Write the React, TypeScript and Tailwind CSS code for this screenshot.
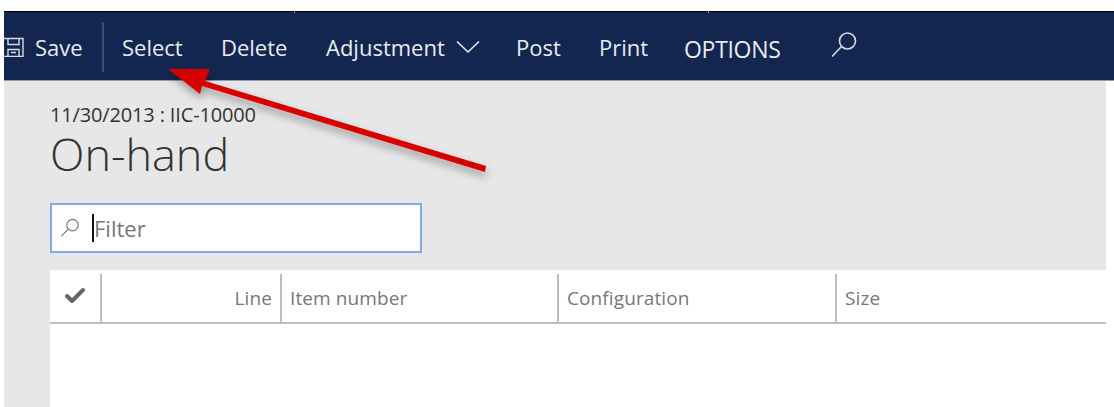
import { Check } from "lucide-react";

const COLUMNS = [
  { label: "Item number", width: "w-[277px]" },
  { label: "Configuration", width: "w-[278px]" },
  { label: "Size", width: "flex-1" },
];

function SearchGlyph({ className }: { className: string }) {
  return (
    <svg viewBox="0 0 28 28" fill="none" stroke="currentColor" strokeWidth="1.6" className={className}>
      <circle cx="17.5" cy="10" r="8" />
      <path d="M11.5 15.5 2 25.5" />
    </svg>
  );
}

function SaveGlyph() {
  return (
    <svg viewBox="0 0 20 20" fill="none" stroke="currentColor" strokeWidth="1.4" className="w-5 h-5 text-[#d5dae5]">
      <path d="M0 1.5h19v18H0" />
      <path d="M4 1.5v6h11v-6M4 19.5v-7h11v7M7 15.5h5" />
    </svg>
  );
}

export default function App() {
  return (
    <div className="relative w-[1114px] h-[407px] overflow-hidden bg-white font-['Open_Sans',sans-serif]">
      <div className="h-[11px]" />
      <div className="ml-1 h-[70px] flex items-center bg-[#12264f] border-t border-black border-b border-b-[#8e99b3] text-[#e8ebf1] text-[22px] leading-none pt-0.5">
        <SaveGlyph />
        <span className="ml-[11px] w-[67px]">Save</span>
        <div className="w-0.5 h-[50px] bg-[#3b4c70]" />
        <span className="ml-[18px] w-[99px]">Select</span>
        <span className="w-[105px]">Delete</span>
        <span className="w-[130px]">Adjustment</span>
        <svg viewBox="0 0 24 14" fill="none" stroke="currentColor" strokeWidth="1.6" className="w-6 h-3.5">
          <path d="M1 1.5 12 12 23 1.5" />
        </svg>
        <span className="ml-9 w-[83px]">Post</span>
        <span className="w-[85px]">Print</span>
        <span className="w-[146px] pt-1 text-[23px] tracking-[-0.3px]">OPTIONS</span>
        <SearchGlyph className="w-7 h-7 mb-1 text-[#d5dae5]" />
      </div>
      <div className="ml-1 mr-2 h-[326px] bg-[#e7e7e7] pl-[46px] flex flex-col">
        <div className="mt-6 text-[20px] leading-5 text-[#333] tracking-[-0.15px]">11/30/2013 : IIC-10000</div>
        <div className="mt-1 text-[45px] leading-[50px] font-light text-[#333]">On-hand</div>
        <div className="mt-6 w-[372px] h-[50px] flex items-center bg-white border-2 border-[#7dabe0] pl-2">
          <SearchGlyph className="w-5 h-5 text-[#777]" />
          <div className="ml-3 w-0.5 h-7 bg-[#111]" />
          <span className="text-[22px] text-[#777]">Filter</span>
        </div>
        <div className="mt-[17px] flex-1 bg-white">
          <div className="h-[54px] flex border-b-2 border-[#bdbdbd] text-[19px] tracking-[0.1px] text-[#777] pt-1">
            <div className="w-[52px] border-r-2 border-[#bdbdbd] flex items-center justify-center">
              <Check size={24} strokeWidth={4} className="text-[#666] mb-1" />
            </div>
            <div className="w-[180px] border-r-2 border-[#bdbdbd] flex items-center justify-end pr-2">Line</div>
            {COLUMNS.map((col) => (
              <div
                key={col.label}
                className={`${col.width} flex items-center pl-2 ${col.label === "Size" ? "" : "border-r-2 border-[#bdbdbd]"}`}
              >
                {col.label}
              </div>
            ))}
          </div>
        </div>
      </div>
      <div className="absolute left-[294px] top-[11px] w-px h-0.5 bg-[#999]" />
      <div className="absolute left-[708px] top-[11px] w-px h-0.5 bg-[#999]" />
      {/* red annotation arrow, pasted over the screenshot */}
      <svg viewBox="0 0 1114 407" className="absolute inset-0 w-[1114px] h-[407px] pointer-events-none">
        <defs>
          <filter id="arrowShadow" x="-10%" y="-20%" width="120%" height="150%">
            <feDropShadow dx="1" dy="5" stdDeviation="4" floodColor="#000" floodOpacity="0.35" />
          </filter>
        </defs>
        <g filter="url(#arrowShadow)" fill="#d90000">
          <path d="M168 69 210 69 205 81 486 166 485 172 202 86 200 94Z" />
        </g>
      </svg>
    </div>
  );
}
